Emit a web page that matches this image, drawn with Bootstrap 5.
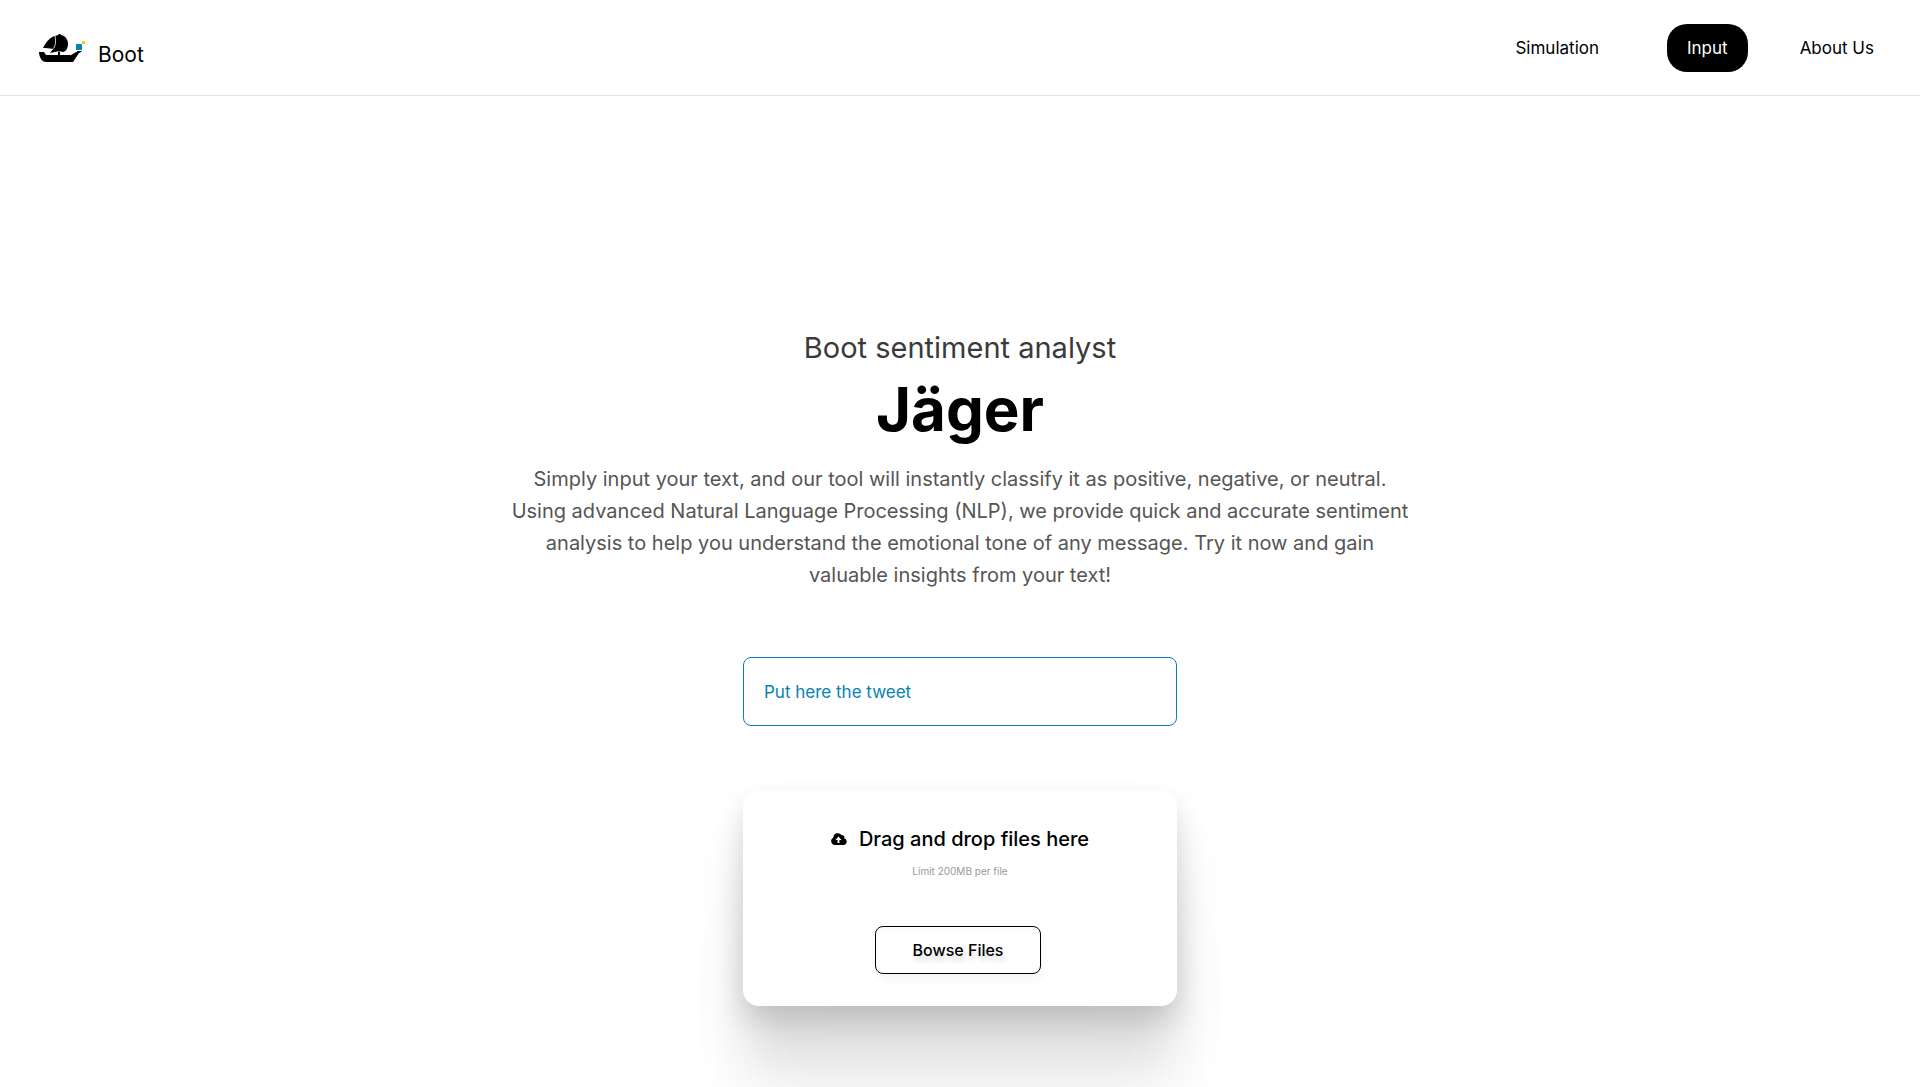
<!DOCTYPE html>
<html lang="en">
<head>
<meta charset="utf-8">
<meta name="viewport" content="width=device-width, initial-scale=1">
<title>Boot – Jäger</title>
<link href="https://cdn.jsdelivr.net/npm/bootstrap@5.3.0/dist/css/bootstrap.min.css" rel="stylesheet">
<style>
body { font-family: Inter, "Open Sans", sans-serif; color: #000; background: #fff; }
.site-header { border-bottom: 1px solid #e2e4ee; padding: 24px 26px 23px 38px; }
.brand-link { font-size: 21px; line-height: 24px; gap: 12px; color: #000; padding-top: 4px; }
.brand-link svg { margin-bottom: 4px; }
.top-nav { gap: 32px; }
.top-nav .nav-link { color: #000; font-size: 17px; line-height: 24px; padding: 12px 20px; border-radius: 20px; }
.top-nav .nav-link.active { background: #000; color: #fff; }
.hero { padding: 232px 16px 72px; }
.hero-kicker { font-size: 29px; line-height: 40px; font-weight: 400; color: #3a3a3a; margin: 0; }
.hero-title { font-size: 60px; line-height: 72px; font-weight: 700; margin: 5px 0 18px; }
.hero-copy { font-size: 20px; line-height: 32px; color: #555; max-width: 906px; margin: 0 0 66px; }
.tool-column { width: 100%; max-width: 434px; }
.tweet-box { height: 69px; border: 1px solid #0582b6; border-radius: 8px; padding: 0 20px; font-size: 17px; color: #0582b6; }
.tweet-box::placeholder { color: #0582b6; opacity: 1; }
.drop-card { margin-top: 65px; height: 215px; border-radius: 16px; background: #fff; padding-top: 32px;
  box-shadow: 0 13px 28px rgba(0,0,0,.14), 0 51px 51px rgba(0,0,0,.11), 0 114px 68px rgba(0,0,0,.04); }
.drop-title { font-size: 20px; line-height: 32px; font-weight: 500; gap: 12px; margin: 0; }
.drop-limit { font-size: 10px; line-height: 16px; color: #999; margin: 8px 0 47px; }
.browse-btn { width: 166px; height: 48px; border: 1px solid #000; border-radius: 8px; background: #fff; font-size: 16px; font-weight: 500;
  box-shadow: 2px 6px 10px rgba(0,0,0,.04), inset 2px 4px 10px rgba(0,0,0,.02); text-shadow: 2px 5px 5px rgba(0,0,0,.15); }
</style>
<script src="https://cdn.jsdelivr.net/npm/bootstrap@5.3.0/dist/js/bootstrap.bundle.min.js"></script>
</head>
<body class="min-vh-100">
<header class="site-header d-flex flex-wrap align-items-center justify-content-between">
  <a href="#" class="brand-link d-flex align-items-end text-decoration-none">
    <svg width="48" height="30" viewBox="0 0 48 30" aria-hidden="true">
      <path d="M1 19h5l2 3h12v-3h2v3h11l7-4h4l-1 1-2 1-6 9H8c-4 0-7-5-7-10z"/>
      <path d="M5 15C8 9 12 4 17 3l3-1 1-1h1l1 1c5 1 7 5 7 9 0 5-3 8-5 8-5-1-8 0-13 1l3-4c-4-1-7-1-10-1z"/>
      <path d="M17 3c1 6 1 10-3 14" fill="none" stroke="#fff" stroke-width=".8"/>
      <rect x="38" y="11" width="6" height="6" rx=".5" fill="#0582b6"/>
      <rect x="44" y="8" width="3" height="3" fill="#fcc60a"/>
    </svg>
    <span>Boot</span>
  </a>
  <nav class="top-nav nav flex-wrap">
    <a class="nav-link me-3" href="#">Simulation</a>
    <a class="nav-link active" aria-current="page" href="#">Input</a>
    <a class="nav-link" href="#">About Us</a>
  </nav>
</header>
<main class="hero d-flex flex-column align-items-center text-center">
  <p class="hero-kicker">Boot sentiment analyst</p>
  <h1 class="hero-title">Jäger</h1>
  <p class="hero-copy">Simply input your text, and our tool will instantly classify it as positive, negative, or neutral. Using advanced Natural Language Processing (NLP), we provide quick and accurate sentiment analysis to help you understand the emotional tone of any message. Try it now and gain valuable insights from your text!</p>
  <div class="tool-column">
    <input class="tweet-box form-control" type="text" placeholder="Put here the tweet" aria-label="Put here the tweet">
    <section class="drop-card d-flex flex-column align-items-center">
      <h2 class="drop-title d-flex align-items-center">
        <svg width="16" height="12" viewBox="0 0 16 12" aria-hidden="true">
          <path d="M4 12a4 4 0 0 1-1.600-7.600A4.500 4.500 0 0 1 10.500 2a2.600 2.600 0 0 1 2.800 3.200A3.500 3.500 0 0 1 12.500 12z"/>
          <path d="M7.500 3.500 10.500 7H8.400v3H6.600V7H4.500z" fill="#fff"/>
        </svg>
        <span>Drag and drop files here</span>
      </h2>
      <p class="drop-limit">Limit 200MB per file</p>
      <button type="button" class="browse-btn me-1">Bowse Files</button>
    </section>
  </div>
</main>
</body>
</html>
